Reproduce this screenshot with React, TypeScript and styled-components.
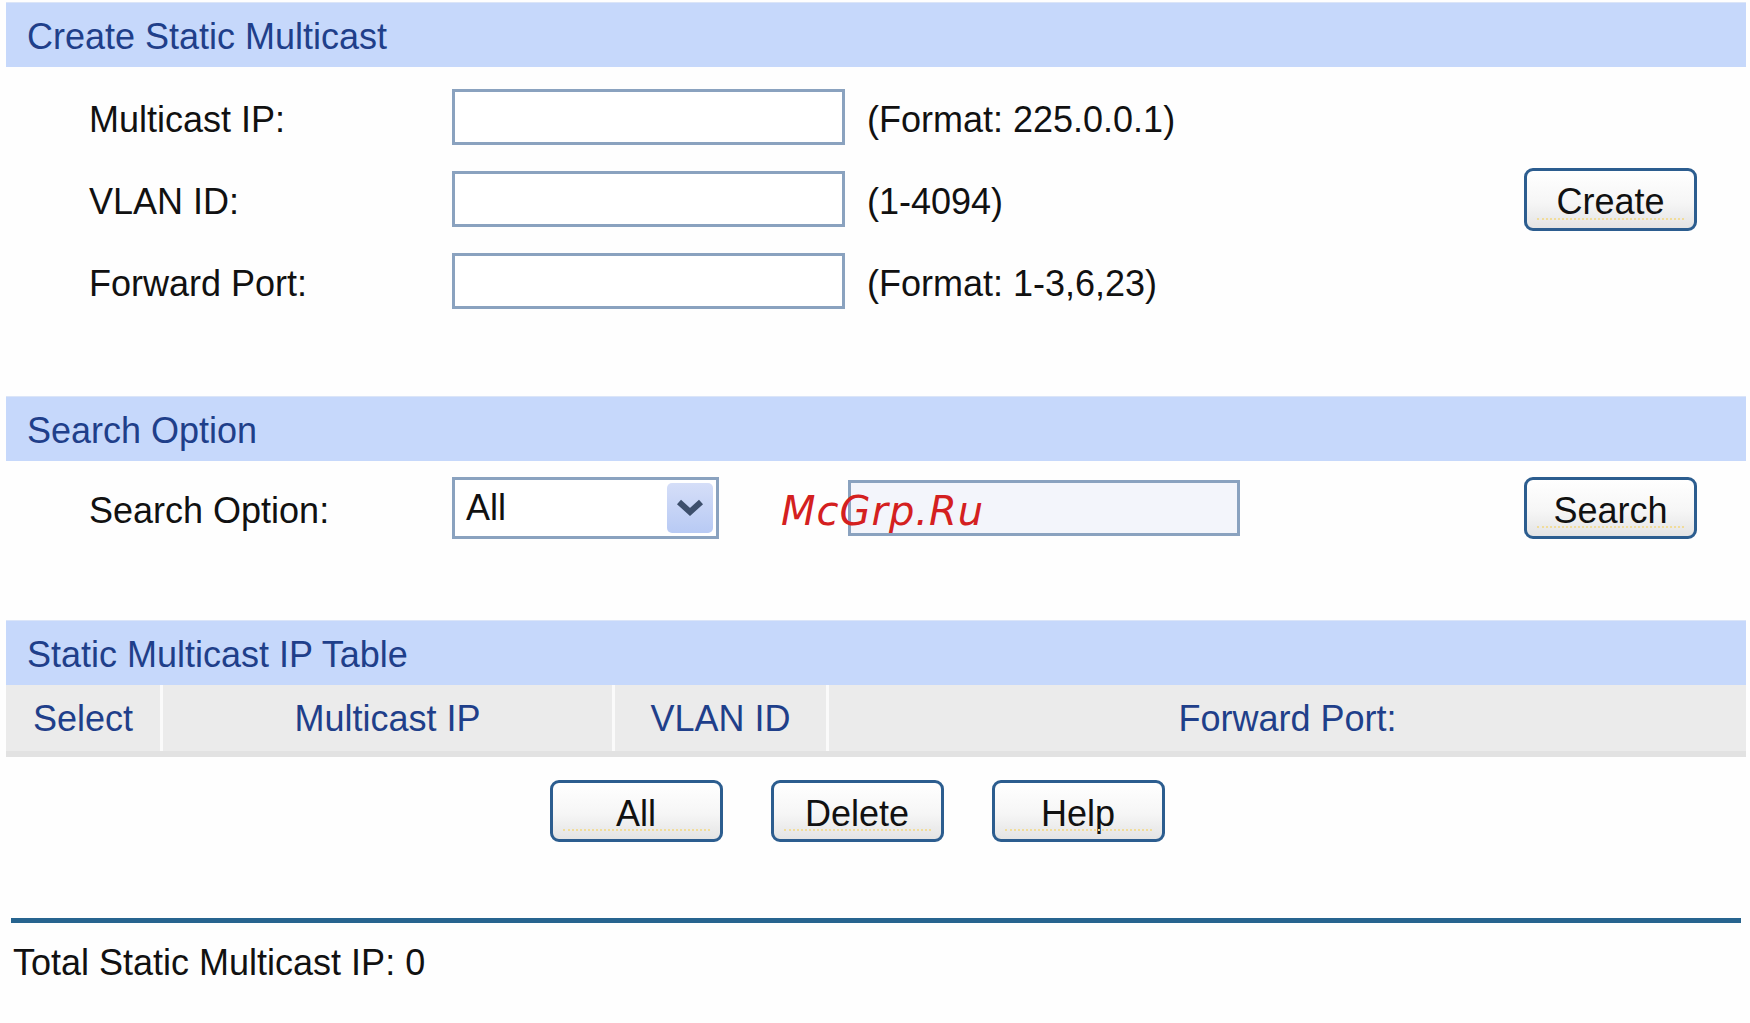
import styled, { createGlobalStyle } from "styled-components";

const GlobalStyle = createGlobalStyle`
	body {
		margin: 0;
		background: #fefefe;
		font-family: "Liberation Sans", Arial, sans-serif;
	}
`;

export default function App() {
	return (
		<>
			<GlobalStyle />
			<Page>
				<SectionHeader>Create Static Multicast</SectionHeader>
				<CreateGrid>
					<Label>Multicast IP:</Label>
					<TextInput type="text" />
					<Hint>(Format: 225.0.0.1)</Hint>
					<Label>VLAN ID:</Label>
					<TextInput type="text" />
					<Hint>(1-4094)</Hint>
					<Label>Forward Port:</Label>
					<TextInput type="text" />
					<Hint>(Format: 1-3,6,23)</Hint>
					<CreateButton>Create</CreateButton>
				</CreateGrid>

				<SectionHeader>Search Option</SectionHeader>
				<SearchRow>
					<SearchLabel>Search Option:</SearchLabel>
					<SelectBox>
						<SelectValue>All</SelectValue>
						<DropButton>
							<svg width="28" height="20" viewBox="0 0 28 20">
								<path d="M3 4 L14 14 L25 4" fill="none" stroke="#3d4f6c" strokeWidth="6" />
							</svg>
						</DropButton>
					</SelectBox>
					<SearchInput type="text" />
					<Spacer />
					<ActionButton>Search</ActionButton>
					<Watermark>McGrp.Ru</Watermark>
				</SearchRow>

				<SectionHeader>Static Multicast IP Table</SectionHeader>
				<TableHead>
					<HeadCell>Select</HeadCell>
					<HeadCell>Multicast IP</HeadCell>
					<HeadCell>VLAN ID</HeadCell>
					<HeadCell>Forward Port:</HeadCell>
				</TableHead>
				<ButtonRow>
					<ActionButton>All</ActionButton>
					<ActionButton>Delete</ActionButton>
					<ActionButton>Help</ActionButton>
				</ButtonRow>
				<Divider />
				<Total>Total Static Multicast IP: 0</Total>
			</Page>
		</>
	);
}

const Page = styled.div`
	width: 1740px;
	padding: 2px 4px 0 6px;
	color: #111;
	font-size: 36px;
`;

const SectionHeader = styled.div`
	height: 65px;
	background-color: #c6d8fb;
	border-top: 1px solid #dbe5f8;
	box-sizing: border-box;
	display: flex;
	align-items: center;
	padding: 4px 0 0 21px;
	font-size: 36px;
	color: #1f3f8a;
`;

const Label = styled.div`
	grid-column: 1;
	padding-top: 6px;
	font-size: 36px;
	color: #111;
	white-space: nowrap;
`;

const Hint = styled.div`
	grid-column: 3;
	padding: 6px 0 0 22px;
	font-size: 36px;
	color: #111;
	white-space: nowrap;
`;

const TextInput = styled.input`
	grid-column: 2;
	width: 100%;
	height: 56px;
	box-sizing: border-box;
	border: 3px solid #8aa2bf;
	background: #fff;
	margin: 0;
	outline: none;
`;

const CreateGrid = styled.div`
	display: grid;
	grid-template-columns: 363px 393px 1fr 173px;
	grid-template-rows: repeat(3, 56px);
	row-gap: 26px;
	align-items: center;
	padding: 22px 49px 87px 83px;
`;

const ActionButton = styled.button`
	position: relative;
	width: 173px;
	height: 62px;
	box-sizing: border-box;
	border: 3px solid #2c5d8f;
	border-radius: 9px;
	background: linear-gradient(#ffffff, #f6f6f6 55%, #e4e4e4);
	font-family: "Liberation Sans", Arial, sans-serif;
	font-size: 36px;
	color: #111;
	padding: 6px 0 0;
	cursor: pointer;
	&::after {
		content: "";
		position: absolute;
		left: 10px;
		right: 10px;
		bottom: 8px;
		border-bottom: 2px dotted #f1dc9a;
	}
`;

const CreateButton = styled(ActionButton)`
	grid-column: 4;
	grid-row: 2;
	height: 63px;
	justify-self: end;
`;

const SearchRow = styled.div`
	position: relative;
	display: flex;
	align-items: center;
	height: 62px;
	padding: 16px 49px 81px 83px;
`;

const SearchLabel = styled(Label)`
	width: 363px;
	flex-shrink: 0;
`;

const SelectBox = styled.div`
	width: 267px;
	height: 62px;
	box-sizing: border-box;
	border: 3px solid #8aa2bf;
	background: #fff;
	display: flex;
	align-items: center;
	padding-left: 11px;
	flex-shrink: 0;
`;

const SelectValue = styled.span`
	font-size: 36px;
	color: #111;
`;

const DropButton = styled.span`
	margin-left: auto;
	margin-right: 3px;
	width: 46px;
	height: 50px;
	border-radius: 5px;
	background: linear-gradient(#d5def8, #b8caf4);
	display: flex;
	align-items: center;
	justify-content: center;
`;

const SearchInput = styled(TextInput)`
	width: 392px;
	margin-left: 129px;
	background: #f3f5fb;
	flex-shrink: 0;
`;

const Spacer = styled.div`
	flex: 1;
`;

const Watermark = styled.span`
	position: absolute;
	left: 775px;
	top: 30px;
	font-family: "DejaVu Sans", sans-serif;
	font-style: italic;
	font-size: 40px;
	line-height: 1;
	letter-spacing: 1px;
	color: #d42020;
	pointer-events: none;
`;

const TableHead = styled.div`
	display: grid;
	grid-template-columns: 154px 452px 214px 1fr;
	height: 72px;
	box-sizing: border-box;
	background: #ebebeb;
	border-bottom: 6px solid #e2e2e2;
`;

const HeadCell = styled.div`
	display: flex;
	align-items: center;
	justify-content: center;
	padding-top: 2px;
	font-size: 36px;
	color: #1f3f8a;
	& + & {
		border-left: 3px solid #fafafa;
	}
`;

const ButtonRow = styled.div`
	display: flex;
	justify-content: center;
	gap: 48px;
	padding: 23px 38px 0 0;
`;

const Divider = styled.div`
	margin: 76px 5px 0 5px;
	height: 5px;
	background: #27648f;
`;

const Total = styled.div`
	margin: 19px 0 0 7px;
	font-size: 36px;
	line-height: 42px;
	color: #111;
`;
